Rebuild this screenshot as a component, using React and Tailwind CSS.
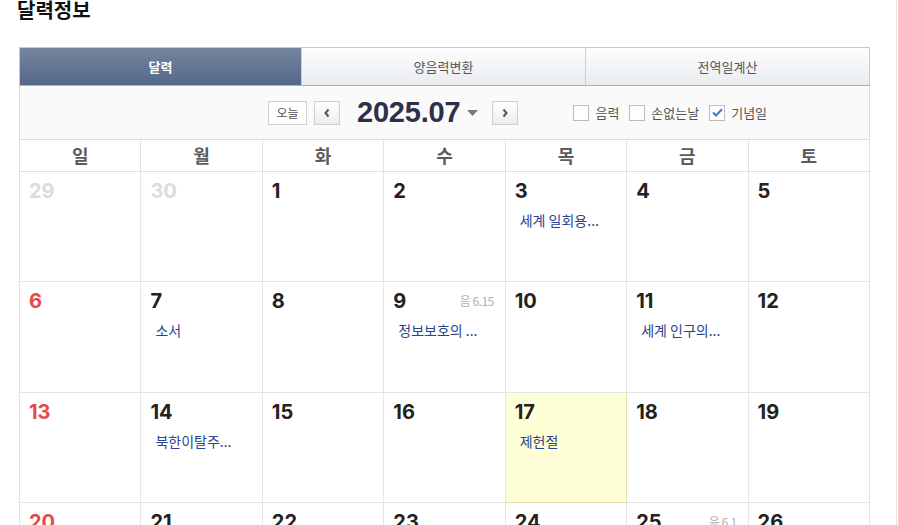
import React from 'react';

const KR = { fontFamily: '"Noto Sans CJK KR", "Noto Sans", sans-serif' };
const NUM = { fontFamily: 'Inter, "Liberation Sans", sans-serif' };

const weekdays = ['일', '월', '화', '수', '목', '금', '토'];

// 2025년 7월 달력 데이터
const weeks = [
  [{ d: 29, other: true }, { d: 30, other: true }, { d: 1 }, { d: 2 }, { d: 3, ev: '세계 일회용...' }, { d: 4 }, { d: 5 }],
  [{ d: 6 }, { d: 7, ev: '소서' }, { d: 8 }, { d: 9, ev: '정보보호의 ...', lunar: '음 6.15' }, { d: 10 }, { d: 11, ev: '세계 인구의...' }, { d: 12 }],
  [{ d: 13 }, { d: 14, ev: '북한이탈주...' }, { d: 15 }, { d: 16 }, { d: 17, ev: '제헌절', today: true }, { d: 18 }, { d: 19 }],
  [{ d: 20 }, { d: 21 }, { d: 22 }, { d: 23 }, { d: 24 }, { d: 25, lunar: '윤 6.1' }, { d: 26 }],
  [{ d: 27 }, { d: 28 }, { d: 29 }, { d: 30 }, { d: 31 }, { d: 1, other: true }, { d: 2, other: true }],
];

function Checkbox({ checked, label }) {
  return (
    <label className="flex items-center gap-[6px] text-[13px] text-[#555]" style={KR}>
      <span className="w-[16px] h-[16px] border border-[#bdbdbd] bg-white flex items-center justify-center">
        {checked && (
          <svg width="11" height="9" viewBox="0 0 11 9">
            <path d="M1 4.5 L4 7.5 L10 1.2" fill="none" stroke="#3b7bc9" strokeWidth="2" />
          </svg>
        )}
      </span>
      {label}
    </label>
  );
}

function DayCell({ cell, col }) {
  let color = 'text-[#222]';
  if (cell.other) color = 'text-[#dcdcdc]';
  else if (col === 0) color = 'text-[#e34b4b]';

  return (
    <div
      className={`h-[110.4px] border-r border-b ${
        cell.today ? 'bg-[#ffffd7] border-[#e4dfb0]' : 'bg-white border-[#e5e5e5]'
      } pl-[9px] pr-[11px] pt-[7px]`}
    >
      <div className="flex items-start justify-between">
        <span className={`text-[20px] leading-[24px] font-bold ${color}`} style={NUM}>
          {cell.d}
        </span>
        {cell.lunar && (
          <span className="text-[12px] leading-[20px] mt-[2px] text-[#b0b0b0] tracking-[-0.5px]" style={KR}>
            {cell.lunar}
          </span>
        )}
      </div>
      {cell.ev && (
        <div className="mt-[7px] ml-[5px] text-[14px] leading-[20px] text-[#28468f]" style={KR}>
          {cell.ev}
        </div>
      )}
    </div>
  );
}

export default function App() {
  return (
    <div className="w-[897px] min-h-[525px] border-r border-[#e6e6e6] bg-white pl-[19px]" style={KR}>
      <h1 className="-ml-[2px] -mt-[1px] text-[20px] leading-[22px] font-bold text-[#111]" style={KR}>
        달력정보
      </h1>

      <div className="w-[851px] mt-[26px]">
        {/* 탭 */}
        <div className="grid grid-cols-[281px_284px_1fr] h-[39px] border border-[#c3c9d1] border-b-[#a9b2bd]">
          <div className="flex items-center justify-center bg-gradient-to-b from-[#74859d] to-[#55688a] text-white text-[13px] font-bold">
            달력
          </div>
          <div className="flex items-center justify-center bg-gradient-to-b from-[#fdfdfe] to-[#e8ecf1] border-l border-[#c9cfd6] text-[13px] text-[#555]">
            양음력변환
          </div>
          <div className="flex items-center justify-center bg-gradient-to-b from-[#fdfdfe] to-[#e8ecf1] border-l border-[#c9cfd6] text-[13px] text-[#555]">
            전역일계산
          </div>
        </div>

        {/* 월 이동 */}
        <div className="h-[54px] flex items-center bg-[#fafafa] border-x border-b border-[#dcdcdc] pl-[248px]">
          <button className="w-[39px] h-[24px] border border-[#cfcfcf] bg-white text-[12px] text-[#555] flex items-center justify-center">
            오늘
          </button>
          <button className="ml-[7px] w-[26px] h-[24px] border border-[#cfcfcf] bg-gradient-to-b from-white to-[#ececec] flex items-center justify-center">
            <svg width="8" height="10" viewBox="0 0 8 10">
              <path d="M5.5 1.5 L2.5 5 L5.5 8.5" fill="none" stroke="#555" strokeWidth="2" />
            </svg>
          </button>
          <span className="ml-[17px] text-[29px] leading-none font-bold text-[#2e3047] tracking-[-0.2px]" style={{ fontFamily: '"Liberation Sans", Arial, sans-serif' }}>
            2025.07
          </span>
          <svg className="ml-[7px]" width="11" height="6" viewBox="0 0 11 6">
            <path d="M0 0 H11 L5.5 6 Z" fill="#7a7a7a" />
          </svg>
          <button className="ml-[14px] w-[26px] h-[24px] border border-[#cfcfcf] bg-gradient-to-b from-white to-[#ececec] flex items-center justify-center">
            <svg width="8" height="10" viewBox="0 0 8 10">
              <path d="M2.5 1.5 L5.5 5 L2.5 8.5" fill="none" stroke="#555" strokeWidth="2" />
            </svg>
          </button>
          <div className="ml-[55px] flex items-center gap-[10px]">
            <Checkbox label="음력" />
            <Checkbox label="손없는날" />
            <Checkbox checked label="기념일" />
          </div>
        </div>

        {/* 요일 */}
        <div className="grid grid-cols-7 h-[32px] border-l border-b border-[#e0e0e0]">
          {weekdays.map((w) => (
            <div
              key={w}
              className="flex items-center justify-center border-r border-[#e3e3e3] text-[18px] font-bold text-[#5c5c5c]"
              style={KR}
            >
              {w}
            </div>
          ))}
        </div>

        {/* 날짜 */}
        <div className="border-l border-[#e3e3e3]">
          {weeks.map((week, i) => (
            <div key={i} className="grid grid-cols-7">
              {week.map((cell, j) => (
                <DayCell key={j} cell={cell} col={j} />
              ))}
            </div>
          ))}
        </div>
      </div>
    </div>
  );
}
